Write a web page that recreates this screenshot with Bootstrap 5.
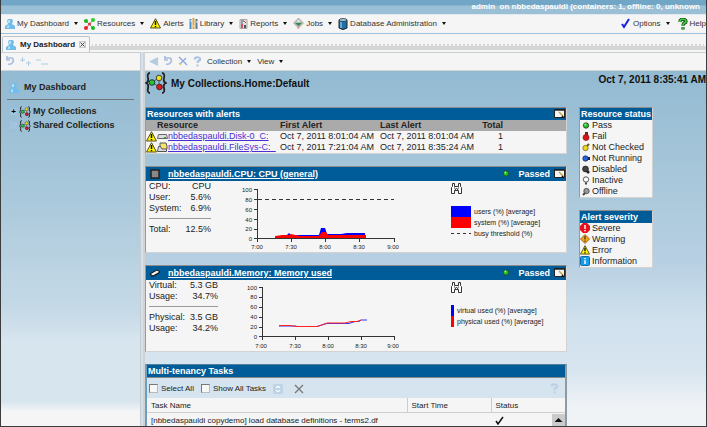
<!DOCTYPE html>
<html lang="en">
<head>
<meta charset="utf-8">
<meta name="viewport" content="width=device-width, initial-scale=1">
<title>My Dashboard</title>
<link rel="stylesheet" href="https://cdn.jsdelivr.net/npm/bootstrap@5.3.0/dist/css/bootstrap.min.css">
<style>
body{font:9px/11px "Liberation Sans",Arial,sans-serif;color:#222;background:#f5f5f5}
svg{display:block;flex:none}
.frame{border:1px solid #3c3c3c;border-top:0}
.banner{height:15px;padding-top:1px;background:linear-gradient(#72a6c6 5px,#9bbfd5 6px);color:#fff;font-size:8px;font-weight:700;line-height:12px;border-bottom:1px solid #dfeaf2}
.banner span{padding-right:6px;white-space:pre}
.menubar{height:19px;gap:5px;padding-left:4px;background:#f5f5f5;border-bottom:1px solid #9cc3de;font-size:8px}
.plain-btn{background:none;border:0;padding:0;display:flex;align-items:center;gap:2px;color:#333;white-space:nowrap;font-size:8px;line-height:11px}
.plain-btn.arrow::after{content:"";border:2px solid transparent;border-top:3px solid #111;border-bottom:0;margin:0 1px 0 3px}
.help-item{margin-left:2px}
.tabstrip{height:18px;padding:2px 0 0 1px}
.tab-item{width:88px;height:16px;border:1px solid #bcc4ca;border-bottom:0;border-radius:2px 2px 0 0;padding:0 3px;gap:4px;font-size:8px;font-weight:700;white-space:nowrap;background:#f7f7f7}
.close-btn{border:1px solid #ccc;background:#eee;width:7px;height:7px;padding:0;color:#444}
.tabline{height:6px;margin-top:8px;background:#d5d7d7;border-top:2px dotted #f5f5f5}
.side{flex:0 0 139px}
.splitter{flex:0 0 5px;background:#d5e1ea;border-left:1px solid #c9cdd0;border-right:2px solid #d0d2d3}
.tools{height:19px;border-top:1px solid #ccd0d2;border-bottom:1px solid #d5d5d5;background:#f5f5f5;gap:5px}
.side-body{background:linear-gradient(#92bad2,#a9c8db 35%,#c6dae7 68%,#d7e5ef 76%,#d7e5ef 93%,#f5f5f5 96%)}
.main-body{background:linear-gradient(#92bad2,#a8c7da 30%,#b8d0e3 54%,#d0e1ed 70%,#d7e5f0 84%,#f0f3f6 95%)}
.side-title{padding:11px 8px 6px;gap:5px;font-weight:700;color:#222}
.side-rule{height:1px;background:#70767a;margin:0 6px 5px}
.tree-row{height:14px;gap:2px;padding-left:9px;font-weight:700}
.expander{width:7px;height:7px;border:0;padding:0;background:#a3c4e0;font-size:8px;line-height:7px;font-weight:700}
.titlebar{height:36px;font-size:10px;font-weight:700;color:#111}
.titlebar h1{font-size:10px;font-weight:700;line-height:26px;margin:0}
.titlebar time{line-height:17px}
.content-row{padding-left:0;gap:12px}
.legend-col{flex:0 0 73px;margin-right:53px}
.panel{background:#f5f5f5;border:1px solid #d3d3d3;border-top-color:#8b8b8b;border-left:1px solid #999;margin-bottom:12px}
.panel-title{background:#005c98;color:#fff;font-size:9px;line-height:12px;height:12px;font-weight:700;margin:0;padding:0 1px;white-space:nowrap}
.panel-title.tall{height:14px;line-height:14px;padding-left:4px}
.panel-title a{color:#fff}
.icon-btn{border:0;padding:0;background:none}
.alerts{width:100%;table-layout:fixed;border-collapse:collapse}
.alerts th,.alerts td{padding:0;height:11px;line-height:11px;white-space:nowrap}
.alerts th{background:#aaa;font-weight:700}
.alerts th:first-child{padding-left:11px}
.alerts a{color:#4b2fd6}
.c-res{width:134px}.c-first{width:100px}.c-last{width:97px}.c-total{width:26px}
.metric{height:71px;padding-left:3px}
.stats{width:62px}
.stats.wide{width:69px}
.stats-cell{flex:0 0 91px}
.stats td,.stats th{padding:0;font-weight:400;line-height:11px;height:11px;white-space:nowrap}
.stats .rule td{height:10px;line-height:0;vertical-align:middle}
.stats hr{margin:0;opacity:1;border-color:#999}
.chart text{font:6px "Liberation Sans",Arial,sans-serif;fill:#222}
.series{font-size:7px;white-space:nowrap;padding:2px 0 0 49px}
.key{height:11px;gap:3px}
.sw{width:20px;height:11px}
.sw.thin{width:3px}
.b{background:#00f}.r{background:#f00}
.sw.dash{background:repeating-linear-gradient(90deg,#333 0 3px,transparent 3px 6px) 0 5px/100% 1px no-repeat}
.legend-list li{height:11px;gap:2px;padding-left:2px;white-space:nowrap}
.tasks{border-color:#4f7f9f;border-left:2px solid #6c9fbe;border-right:2px solid #8f9aa1;margin-bottom:0}
.task-tools{height:21px;padding:2px 2px 0;background:#d6e4ef;border-top:1px solid #888;font-size:8px;gap:7px}
.task-tools label{display:flex;align-items:center;gap:3px;white-space:nowrap}
.task-tools input{appearance:none;width:9px;height:9px;margin:0;background:#f7f7f7;border:1px solid #777;border-right-color:#bbb;border-bottom-color:#bbb}
.task-table{width:100%;table-layout:fixed;font-size:8px;border-collapse:collapse;background:#f5f5f5}
.task-table th,.task-table td{padding:0 4px;height:15px;font-weight:400;white-space:nowrap}
.task-table th{border-bottom:1px solid #d0d0d0}
.task-table th+th{border-left:1px solid #ccc}
.c-start{width:84px}.c-status{width:74px}
.scroll-up{width:13px;height:14px;background:#c9cbcc;border:0;padding:0}
</style>
<script src="https://cdn.jsdelivr.net/npm/bootstrap@5.3.0/dist/js/bootstrap.bundle.min.js"></script>
</head>
<body>
<svg class="d-none" aria-hidden="true">
  <symbol id="person" viewBox="0 0 10 11"><path d="M3 1h4l1 2-1 3 3 2v3H0V8l3-2-1-3z" fill="#72bdea"/><path d="M3 2h2v3H3zM2 8l2-1v3H2z" fill="#b5e0fa"/></symbol>
  <symbol id="nodes" viewBox="0 0 11 12"><path d="M2 3l7 7M2 10l7-8" stroke="#888"/><circle cx="2" cy="3" r="2" fill="#1cb51c"/><circle cx="9" cy="2" r="2" fill="#2ad02a"/><circle cx="5.500" cy="6" r="1.500" fill="#e33"/><circle cx="2" cy="10" r="2" fill="#e22"/><circle cx="9" cy="10" r="2" fill="#19bb19"/></symbol>
  <symbol id="warn" viewBox="0 0 11 11"><path d="M5.500.700L10.500 10H.5z" fill="#fff200" stroke="#54501a"/><path d="M5.500 3v4M5.500 8v1.300" stroke="#111" stroke-width="1.500"/></symbol>
  <symbol id="books" viewBox="0 0 9 11"><path d="M1.500 1v10" stroke="#4a8fc4" stroke-width="2"/><path d="M4.500 0v11" stroke="#e2a43a" stroke-width="2"/><path d="M7.500 1v10" stroke="#557b9a" stroke-width="2"/><path d="M1 3h2M4 8h1M7 4h2" stroke="#fff"/></symbol>
  <symbol id="report" viewBox="0 0 9 10"><path d="M1 .5h7v9H1z" fill="#dfe3e8" stroke="#a6a6a6"/><path d="M2 2h3M2 4h2" stroke="#555"/><path d="M2 5h2v4H2z" fill="#d55"/><path d="M5 6h2v3H5z" fill="#456"/><path d="M5 2l2 2" stroke="#c44"/></symbol>
  <symbol id="jobs" viewBox="0 0 11 11"><path d="M5.500 0l5 5-5 5-5-5z" fill="#b9bdb9" stroke="#888" stroke-width=".5"/><path d="M2 5h7L5.500 8z" fill="#358a4b"/><path d="M4 2h3v2H4z" fill="#ddd"/><path d="M5 8l2 2-3 1z" fill="#d99"/></symbol>
  <symbol id="db" viewBox="0 0 10 12"><path d="M1 2v8q4 3 8 0V2z" fill="#206fa8" stroke="#222"/><ellipse cx="5" cy="2" rx="4" ry="1.500" fill="#9bc8e5" stroke="#222" stroke-width=".7"/><path d="M3 4v6" stroke="#79bde8" stroke-width="1.500"/></symbol>
  <symbol id="coll" viewBox="0 0 22 22"><path d="M5 1Q2 1 3 6q1 4-2 5 3 1 2 5-1 5 2 5M17 1q3 0 2 5-1 4 2 5-3 1-2 5 1 5-2 5" fill="none" stroke="#222" stroke-width="1.800"/><path d="M7 10l7-4v9z" fill="none" stroke="#555"/><circle cx="7" cy="10.500" r="2.800" fill="#25c925" stroke="#234"/><circle cx="14" cy="6" r="2.800" fill="#f3df20" stroke="#443"/><circle cx="14.500" cy="15" r="2.800" fill="#e31818" stroke="#422"/></symbol>
  <symbol id="cycle" viewBox="0 0 10 10"><path d="M2 2h5q2 1 1 4-2 3-5 2M2 0v4h3" fill="none" stroke="#a9bfe0" stroke-width="1.700"/></symbol>
  <symbol id="cross" viewBox="0 0 10 10"><path d="M1 1l8 8M8 2L2 8" stroke="#8aa6e8" stroke-width="1.300"/><path d="M1 7l2 2" stroke="#e2ca60" stroke-width="1.500"/></symbol>
  <symbol id="ask" viewBox="0 0 9 11"><path d="M1.500 3.500Q2 1 4.500 1.200 8 1.500 7 4q-2.500 1-2.500 3M4.500 8.500v2" fill="none" stroke="currentColor" stroke-width="2"/></symbol>
  <symbol id="edit" viewBox="0 0 11 9"><path d="M.5.5h10v8H.5z" fill="#f5f5f5" stroke="#222"/><path d="M0 1h11" stroke="#222" stroke-width="1.500"/><path d="M5 3l4 4" stroke="#c3a441" stroke-width="1.500"/><path d="M8 7l2 2" stroke="#111" stroke-width="1.500"/></symbol>
  <symbol id="ball" viewBox="0 0 8 9"><circle cx="4" cy="4.500" r="2.700" fill="currentColor" stroke="#333" stroke-width=".8"/><circle cx="3.300" cy="3.500" r=".9" fill="#fff" opacity=".65"/></symbol>
  <symbol id="bino" viewBox="0 0 11 11"><path d="M1.500.5h2v3h4v-3h2v3l1 1v6h-3v-3h-4v3h-3v-6l1-1z" fill="#fff" stroke="#333"/><path d="M3 5h1M7 5h1M4 7l1.500-2L7 7" stroke="#333" fill="none"/></symbol>
</svg>

<div class="frame vh-100 d-flex flex-column overflow-hidden">
  <header class="banner d-flex justify-content-end overflow-hidden"><span>admin  on nbbedaspauldi (containers: 1, offline: 0, unknown</span></header>

  <nav class="menubar d-flex align-items-center flex-shrink-0 overflow-hidden" aria-label="Main">
    <button class="plain-btn arrow"><svg width="10" height="11"><use href="#person"/></svg>My Dashboard</button>
    <button class="plain-btn arrow"><svg width="11" height="12"><use href="#nodes"/></svg>Resources</button>
    <button class="plain-btn"><svg width="11" height="11"><use href="#warn"/></svg>Alerts</button>
    <button class="plain-btn arrow"><svg width="9" height="11"><use href="#books"/></svg>Library</button>
    <button class="plain-btn arrow"><svg width="9" height="10"><use href="#report"/></svg>Reports</button>
    <button class="plain-btn arrow"><svg width="11" height="11"><use href="#jobs"/></svg>Jobs</button>
    <button class="plain-btn arrow"><svg width="10" height="12"><use href="#db"/></svg>Database Administration</button>
    <button class="plain-btn arrow ms-auto"><svg width="10" height="11" viewBox="0 0 10 11"><path d="M1 6l2 3L8 1" fill="none" stroke="#1720e0" stroke-width="2"/></svg>Options</button>
    <button class="plain-btn help-item"><svg width="10" height="12" viewBox="0 0 9 11"><path d="M1.500 3.500Q2 1 4.500 1.200 8 1.500 7 4q-2.500 1-2.500 3M4.500 8.500v2" fill="none" stroke="#1b4a1b" stroke-width="3"/><path d="M1.500 3.500Q2 1 4.500 1.200 8 1.500 7 4q-2.500 1-2.500 3M4.500 8.700v1.500" fill="none" stroke="#3fd23f" stroke-width="1.500"/></svg>Help</button>
  </nav>

  <div class="tabstrip d-flex flex-shrink-0">
    <div class="tab-item d-flex align-items-center flex-shrink-0"><svg width="10" height="11"><use href="#person"/></svg><span>My Dashboard</span>
      <button class="close-btn ms-auto" aria-label="Close tab"><svg width="5" height="5" viewBox="0 0 5 5"><path d="M.5.5l4 4M4.500.5l-4 4" stroke="#444"/></svg></button></div>
    <div class="tabline flex-grow-1"></div>
  </div>

  <div class="d-flex flex-grow-1 overflow-hidden">
    <aside class="side d-flex flex-column">
      <div class="tools d-flex align-items-center ps-1">
        <button class="icon-btn" aria-label="Refresh"><svg width="10" height="10"><use href="#cycle"/></svg></button>
        <button class="icon-btn" aria-label="Expand all"><svg width="11" height="9" viewBox="0 0 11 9"><path d="M0 3h5M2.500 0v5M6 6h5M8.500 4v5" stroke="#afcbe2"/></svg></button>
        <button class="icon-btn" aria-label="Collapse all"><svg width="12" height="9" viewBox="0 0 12 9"><path d="M0 3h5M5 7h7" stroke="#a9cce2"/></svg></button>
      </div>
      <div class="side-body flex-grow-1">
        <div class="side-title d-flex align-items-center"><svg width="10" height="11"><use href="#person"/></svg>My Dashboard</div>
        <div class="side-rule"></div>
        <div class="tree-row d-flex align-items-center"><button class="expander" aria-label="Expand">+</button><svg width="12" height="12"><use href="#coll"/></svg>My Collections</div>
        <div class="tree-row d-flex align-items-center"><button class="expander" aria-label="Expand"></button><svg width="12" height="12"><use href="#coll"/></svg>Shared Collections</div>
      </div>
    </aside>
    <div class="splitter"></div>
    <main class="flex-grow-1 d-flex flex-column overflow-hidden">
      <div class="tools d-flex align-items-center ps-1 flex-shrink-0">
        <button class="icon-btn" aria-label="Back"><svg width="9" height="9" viewBox="0 0 9 9"><path d="M9 0v9L0 4.500z" fill="#b3cce0"/></svg></button>
        <button class="icon-btn" aria-label="Refresh"><svg width="10" height="10"><use href="#cycle"/></svg></button>
        <button class="icon-btn" aria-label="Remove"><svg width="10" height="10"><use href="#cross"/></svg></button>
        <button class="icon-btn" aria-label="Help" style="color:#a8c4e2"><svg width="9" height="11"><use href="#ask"/></svg></button>
        <button class="plain-btn arrow">Collection</button>
        <button class="plain-btn arrow">View</button>
      </div>
      <div class="main-body flex-grow-1 overflow-hidden">
        <div class="titlebar d-flex justify-content-between">
          <div class="d-flex gap-1"><svg width="22" height="24"><use href="#coll"/></svg><h1>My Collections.Home:Default</h1></div>
          <time>Oct 7, 2011 8:35:41 AM</time>
        </div>
        <div class="content-row d-flex align-items-start">
          <div class="flex-grow-1">
            <section class="panel">
              <h2 class="panel-title d-flex align-items-center">Resources with alerts<button class="icon-btn ms-auto" aria-label="Edit"><svg width="11" height="9"><use href="#edit"/></svg></button></h2>
              <table class="alerts">
                <colgroup><col class="c-res"><col class="c-first"><col class="c-last"><col class="c-total"><col></colgroup>
                <thead><tr><th>Resource</th><th>First Alert</th><th>Last Alert</th><th class="text-end">Total</th><th></th></tr></thead>
                <tbody>
                <tr><td><div class="d-flex align-items-center"><svg width="11" height="11"><use href="#warn"/></svg><svg width="11" height="9" viewBox="0 0 11 9"><path d="M1.500 2.500h8l1 4h-10z" fill="#ddd" stroke="#666"/><path d="M7 5.500h2" stroke="#2a2"/></svg><a href="#disk">nbbedaspauldi.Disk-0_C:</a></div></td><td>Oct 7, 2011 8:01:04 AM</td><td>Oct 7, 2011 8:01:04 AM</td><td class="text-end">1</td><td></td></tr>
                <tr><td><div class="d-flex align-items-center"><svg width="11" height="11"><use href="#warn"/></svg><svg width="11" height="11" viewBox="0 0 11 11"><path d="M1.500 4.500h8v5h-9z" fill="#ddd" stroke="#555"/><path d="M3 4V1h6l1 3v3H5z" fill="#f3e46d" stroke="#555"/></svg><a href="#filesys">nbbedaspauldi.FileSys-C:_</a></div></td><td>Oct 7, 2011 7:21:04 AM</td><td>Oct 7, 2011 8:35:24 AM</td><td class="text-end">1</td><td></td></tr>
                </tbody>
              </table>
            </section>

            <section class="panel">
              <h2 class="panel-title tall d-flex align-items-center"><svg width="10" height="10" viewBox="0 0 10 10"><path d="M1 1h8v8H1z" fill="#888" stroke="#222" stroke-width="1.500"/></svg><a class="ms-1 ps-1" href="#cpu">nbbedaspauldi.CPU: CPU (general)</a>
                <svg class="ms-auto me-2" width="8" height="9" color="#19c819"><use href="#ball"/></svg><span class="me-1">Passed</span><button class="icon-btn" aria-label="Edit"><svg width="11" height="9"><use href="#edit"/></svg></button></h2>
              <div class="metric d-flex">
                <div class="stats-cell"><table class="stats">
                  <tr><th>CPU:</th><td class="text-end">CPU</td></tr>
                  <tr><th>User:</th><td class="text-end">5.6%</td></tr>
                  <tr><th>System:</th><td class="text-end">6.9%</td></tr>
                  <tr class="rule"><td colspan="2"><hr></td></tr>
                  <tr><th>Total:</th><td class="text-end">12.5%</td></tr>
                </table></div>
                <svg class="chart" width="162" height="70" viewBox="240 181 162 70" role="img" aria-label="CPU usage">
                  <path d="M275 238v-2h5l4-1h3l2-2 2 2h28l2-7h4l2 6h14l6-1h18v5z" fill="#00f"/>
                  <path d="M275 238v-2l8-1h6l2-1 4 1 6 1h18l3-4h4l2 3h38v3z" fill="#f00"/>
                  <path d="M257.500 189v49.500H394.500M254 189.500h4M254 199.500h4M254 209.500h4M254 219.500h4M254 229.500h4M254 238.500h4M257.500 238v4M291.500 238v4M325.500 238v4M359.500 238v4M394.500 238v4" fill="none" stroke="#333"/>
                  <path d="M258 199.500h136" stroke="#333" stroke-dasharray="4 3"/>
                  <g text-anchor="end"><text x="252" y="192">100</text><text x="252" y="202">80</text><text x="252" y="212">60</text><text x="252" y="222">40</text><text x="252" y="231">20</text><text x="252" y="241">0</text></g>
                  <g text-anchor="middle"><text x="257" y="249">7:00</text><text x="291" y="249">7:30</text><text x="325" y="249">8:00</text><text x="359" y="249">8:30</text><text x="393" y="249">9:00</text></g>
                </svg>
                <div class="series">
                  <button class="icon-btn d-block mb-2 pb-1" aria-label="Zoom"><svg width="11" height="11"><use href="#bino"/></svg></button>
                  <div class="key d-flex align-items-center"><span class="sw b"></span>users (%) [average]</div>
                  <div class="key d-flex align-items-center"><span class="sw r"></span>system (%) [average]</div>
                  <div class="key d-flex align-items-center"><span class="sw dash"></span>busy threshold (%)</div>
                </div>
              </div>
            </section>

            <section class="panel">
              <h2 class="panel-title tall d-flex align-items-center"><svg width="10" height="10" viewBox="0 0 10 10"><path d="M0 6l7-4 3 2-7 4z" fill="#eee" stroke="#111"/><path d="M1 8l2 1 6-4" fill="none" stroke="#111" stroke-dasharray="1 1"/></svg><a class="ms-1 ps-1" href="#memory">nbbedaspauldi.Memory: Memory used</a>
                <svg class="ms-auto me-2" width="8" height="9" color="#19c819"><use href="#ball"/></svg><span class="me-1">Passed</span><button class="icon-btn" aria-label="Edit"><svg width="11" height="9"><use href="#edit"/></svg></button></h2>
              <div class="metric d-flex">
                <div class="stats-cell"><table class="stats wide">
                  <tr><th>Virtual:</th><td class="text-end">5.3 GB</td></tr>
                  <tr><th>Usage:</th><td class="text-end">34.7%</td></tr>
                  <tr class="rule"><td colspan="2"><hr></td></tr>
                  <tr><th>Physical:</th><td class="text-end">3.5 GB</td></tr>
                  <tr><th>Usage:</th><td class="text-end">34.2%</td></tr>
                </table></div>
                <svg class="chart" width="162" height="70" viewBox="240 280 162 70" role="img" aria-label="Memory used">
                  <path d="M279 326h16l2 .5h20l10-3h22l6-2h4l2-1.500h6" fill="none" stroke="#33f"/>
                  <path d="M279 325.500h10l8 1h20l3-1 7-2.500h18l6-1.500h6l4-1.500" fill="none" stroke="#f22"/>
                  <path d="M262.500 287v49.500H394.500M259 287.500h4M259 297.500h4M259 307.500h4M259 317.500h4M259 327.500h4M259 336.500h4M262.500 336v4M295.500 336v4M328.500 336v4M361.500 336v4M394.500 336v4" fill="none" stroke="#333"/>
                  <g text-anchor="end"><text x="257" y="290">100</text><text x="257" y="299">80</text><text x="257" y="309">60</text><text x="257" y="319">40</text><text x="257" y="329">20</text><text x="257" y="339">0</text></g>
                  <g text-anchor="middle"><text x="261" y="348">7:00</text><text x="295" y="348">7:30</text><text x="328" y="348">8:00</text><text x="361" y="348">8:30</text><text x="393" y="348">9:00</text></g>
                </svg>
                <div class="series">
                  <button class="icon-btn d-block mb-2 pb-1" aria-label="Zoom"><svg width="11" height="11"><use href="#bino"/></svg></button>
                  <div class="key d-flex align-items-center"><span class="sw thin b"></span>virtual used (%) [average]</div>
                  <div class="key d-flex align-items-center"><span class="sw thin r"></span>physical used (%) [average]</div>
                </div>
              </div>
            </section>

            <section class="panel tasks">
              <h2 class="panel-title">Multi-tenancy Tasks</h2>
              <div class="task-tools d-flex align-items-center">
                <label><input type="checkbox">Select All</label>
                <label><input type="checkbox">Show All Tasks</label>
                <button class="icon-btn" aria-label="Run"><svg width="10" height="10" viewBox="0 0 10 10"><rect width="10" height="10" rx="2" fill="#bdd4e8"/><path d="M7 4Q5 1 3 4M3 6q2 3 4 0" fill="none" stroke="#fff" stroke-width="1.300"/></svg></button>
                <button class="icon-btn ms-1" aria-label="Delete"><svg width="10" height="10" viewBox="0 0 10 10"><path d="M1 1l8 8M9 1L1 9" stroke="#777" stroke-width="1.300"/></svg></button>
                <button class="icon-btn ms-auto me-1" aria-label="Help" style="color:#bccfe4"><svg width="9" height="11"><use href="#ask"/></svg></button>
              </div>
              <table class="task-table">
                <colgroup><col><col class="c-start"><col class="c-status"></colgroup>
                <thead><tr><th>Task Name</th><th>Start Time</th><th>Status</th></tr></thead>
                <tbody><tr><td>[nbbedaspauldi copydemo] load database definitions - terms2.df</td><td></td><td class="pe-0"><div class="d-flex justify-content-between align-items-center"><svg width="10" height="9" viewBox="0 0 10 9"><path d="M1 5l2 3 5-7" fill="none" stroke="#111" stroke-width="1.500"/></svg><button class="scroll-up" aria-label="Scroll up"><svg width="13" height="10" viewBox="0 0 13 10"><path d="M6.500 2l4 4h-8z" fill="#111"/></svg></button></div></td></tr></tbody>
              </table>
            </section>
          </div>

          <div class="legend-col">
            <section class="panel">
              <h2 class="panel-title">Resource status</h2>
              <ul class="legend-list list-unstyled mb-0">
                <li class="d-flex align-items-center"><svg width="8" height="9" color="#19c819"><use href="#ball"/></svg>Pass</li>
                <li class="d-flex align-items-center"><svg width="8" height="9" viewBox="0 0 8 9"><path d="M3 0h3v4H3z" fill="#722"/><circle cx="4" cy="5.500" r="3" fill="#e01010" stroke="#622" stroke-width=".7"/></svg>Fail</li>
                <li class="d-flex align-items-center"><svg width="8" height="9" viewBox="0 0 8 9"><path d="M4 4l3-3" stroke="#665c10" stroke-width="2"/><circle cx="3.500" cy="5" r="2.700" fill="#e8d820" stroke="#665c10" stroke-width=".7"/></svg>Not Checked</li>
                <li class="d-flex align-items-center"><svg width="8" height="9" viewBox="0 0 8 9"><path d="M4 4.500h4" stroke="#124" stroke-width="3"/><circle cx="3.500" cy="4.500" r="2.700" fill="#2a63e0" stroke="#124" stroke-width=".7"/></svg>Not Running</li>
                <li class="d-flex align-items-center"><svg width="8" height="9" viewBox="0 0 8 9"><path d="M4 5l3 3" stroke="#222" stroke-width="2.500"/><circle cx="3.500" cy="4" r="2.900" fill="#444" stroke="#111" stroke-width=".7"/></svg>Disabled</li>
                <li class="d-flex align-items-center"><svg width="8" height="9" viewBox="0 0 8 9"><circle cx="4" cy="3.500" r="2.700" fill="#fff" stroke="#555"/><path d="M3 7.500h2" stroke="#444" stroke-width="2"/></svg>Inactive</li>
                <li class="d-flex align-items-center"><svg width="8" height="9" viewBox="0 0 8 9"><path d="M4 5L1 8" stroke="#444" stroke-width="2"/><circle cx="4.500" cy="4" r="2.700" fill="#999" stroke="#444" stroke-width=".8"/></svg>Offline</li>
              </ul>
            </section>
            <section class="panel">
              <h2 class="panel-title">Alert severity</h2>
              <ul class="legend-list list-unstyled mb-0">
                <li class="d-flex align-items-center ps-0"><svg width="10" height="10" viewBox="0 0 10 10"><path d="M3 0h4l3 3v4l-3 3H3L0 7V3z" fill="#e8101c"/><path d="M5 2v4M5 7v1.300" stroke="#fff" stroke-width="1.500"/></svg>Severe</li>
                <li class="d-flex align-items-center ps-0"><svg width="10" height="10" viewBox="0 0 10 10"><path d="M5 .5L9.500 5 5 9.500.5 5z" fill="#f5a21a" stroke="#a66c10"/><path d="M5 2v3.500M5 6.500v1.300" stroke="#333" stroke-width="1.200"/></svg>Warning</li>
                <li class="d-flex align-items-center ps-0"><svg width="10" height="10"><use href="#warn"/></svg>Error</li>
                <li class="d-flex align-items-center ps-0"><svg width="10" height="10" viewBox="0 0 10 10"><rect x=".5" y=".5" width="9" height="9" rx="1" fill="#189cec" stroke="#126aa8"/><path d="M5 2v1.300M5 4.300V8" stroke="#fff" stroke-width="1.500"/></svg>Information</li>
              </ul>
            </section>
          </div>
        </div>
      </div>
    </main>
  </div>
</div>
</body>
</html>
